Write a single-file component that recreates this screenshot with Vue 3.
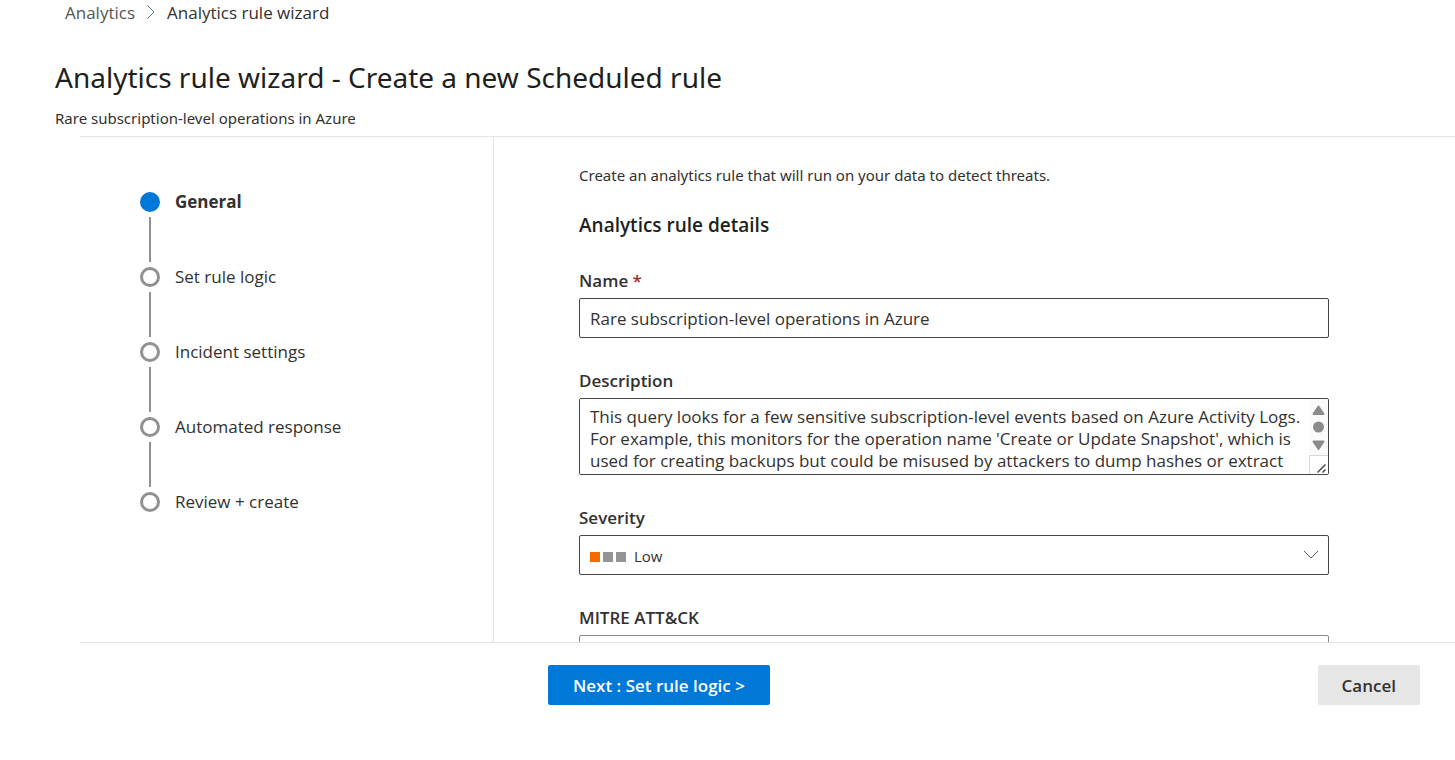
<script setup>
import { ref } from 'vue'

const steps = [
  'General',
  'Set rule logic',
  'Incident settings',
  'Automated response',
  'Review + create',
]
const current = ref(0)
const name = ref('Rare subscription-level operations in Azure')
const description = ref(
  "This query looks for a few sensitive subscription-level events based on Azure Activity Logs. For example, this monitors for the operation name 'Create or Update Snapshot', which is used for creating backups but could be misused by attackers to dump hashes or extract"
)
const severity = ref('Low')
const tactics = ref('')
</script>

<template>
  <div class="page">
    <header class="head">
      <nav class="crumbs" aria-label="Breadcrumb">
        <a href="#" class="crumb-link">Analytics</a>
        <svg class="crumb-sep" width="8" height="14" viewBox="0 0 8 14" aria-hidden="true">
          <path d="M0.500 0.500l6.500 6.500-6.500 6.500" fill="none" stroke="#5a6f9c" stroke-width="1" />
        </svg>
        <span>Analytics rule wizard</span>
      </nav>
      <h1>Analytics rule wizard - Create a new Scheduled rule</h1>
      <p class="subtitle">Rare subscription-level operations in Azure</p>
    </header>

    <div class="body">
      <nav class="side" aria-label="Wizard steps">
        <ol class="steps">
          <li v-for="(step, i) in steps" :key="step">
            <button
              type="button"
              class="step"
              :class="{ active: i === current }"
              @click="current = i"
            >
              <span class="dot"></span>
              <span class="step-text">{{ step }}</span>
            </button>
          </li>
        </ol>
      </nav>

      <main class="main">
        <form class="form" @submit.prevent>
          <p class="intro">Create an analytics rule that will run on your data to detect threats.</p>
          <h2>Analytics rule details</h2>

          <div class="field">
            <label for="name">Name <span class="req">*</span></label>
            <input id="name" v-model="name" class="control" type="text" required />
          </div>

          <div class="field">
            <label for="description">Description</label>
            <div class="area">
              <textarea id="description" v-model="description"></textarea>
              <div class="scroll" aria-hidden="true">
                <svg width="19" height="56" viewBox="0 0 19 56">
                  <path d="M9.500 7.500L14.500 15H4.500Z" fill="#8b8b8b" stroke="#8b8b8b" stroke-width="2" stroke-linejoin="round" />
                  <circle cx="9.500" cy="28" r="5.500" fill="#8b8b8b" />
                  <path d="M9.500 50L14.500 42.500H4.500Z" fill="#8b8b8b" stroke="#8b8b8b" stroke-width="2" stroke-linejoin="round" />
                </svg>
                <svg class="grip" width="19" height="19" viewBox="0 0 18 18">
                  <path d="M7.500 16.500L15.500 8.500M12.500 16.500L15.500 13.500" fill="none" stroke="#4a4a4a" stroke-width="1.500" />
                </svg>
              </div>
            </div>
          </div>

          <div class="field">
            <label for="severity">Severity</label>
            <div class="select">
              <select id="severity" v-model="severity" class="control">
                <option>High</option>
                <option>Medium</option>
                <option>Low</option>
                <option>Informational</option>
              </select>
              <span class="level" aria-hidden="true"><i class="on"></i><i></i><i></i></span>
              <svg class="chevron" width="16" height="9" viewBox="0 0 16 9" aria-hidden="true">
                <path d="M1 1l7 7 7-7" fill="none" stroke="#4f5f6f" stroke-width="1" />
              </svg>
            </div>
          </div>

          <div class="field">
            <label for="mitre">MITRE ATT&amp;CK</label>
            <select id="mitre" v-model="tactics" class="control light">
              <option value=""></option>
            </select>
          </div>
        </form>
      </main>
    </div>

    <footer class="foot">
      <button type="button" class="btn primary">Next : Set rule logic &gt;</button>
      <button type="button" class="btn">Cancel</button>
    </footer>
  </div>
</template>

<style>
body {
  margin: 0;
  background: #fff;
}
</style>

<style scoped>
.page {
  display: flex;
  flex-direction: column;
  height: 100vh;
  overflow: hidden;
  box-sizing: border-box;
  font-family: "Segoe UI", "Open Sans", "Noto Sans", sans-serif;
  font-size: 17px;
  color: #323130;
}
.page *,
.page *::before {
  box-sizing: border-box;
}
button,
input,
select,
textarea {
  font: inherit;
  color: inherit;
}
h1,
.subtitle,
.intro {
  font-family: "Segoe UI", "Noto Sans", "Open Sans", sans-serif;
}
.head {
  flex: none;
  padding-left: 55px;
}
.crumbs {
  display: flex;
  align-items: center;
  height: 24px;
  padding-left: 10px;
}
.crumb-link {
  color: #555;
  text-decoration: none;
}
.crumb-sep {
  margin: 0 12px;
}
h1 {
  margin: 31px 0 0;
  font-size: 28px;
  font-weight: 400;
  line-height: 44px;
  color: #201f1e;
}
.subtitle {
  margin: 9px 0 8px;
  font-size: 15px;
  line-height: 20px;
}
.body {
  flex: 1;
  min-height: 0;
  display: flex;
  margin-left: 80px;
  border-top: 1px solid #e5e5e5;
  border-bottom: 1px solid #e5e5e5;
}
.side {
  flex: none;
  width: 414px;
  padding: 50px 0 0 60px;
  border-right: 1px solid #e5e5e5;
}
.steps {
  display: flex;
  flex-direction: column;
  gap: 45px;
  margin: 0;
  padding: 0;
  list-style: none;
}
.steps li {
  position: relative;
  height: 30px;
}
.steps li + li::before {
  content: "";
  position: absolute;
  left: 9px;
  top: -45px;
  width: 2px;
  height: 45px;
  background: #919191;
}
.step {
  display: flex;
  align-items: center;
  gap: 15px;
  height: 30px;
  padding: 0;
  border: 0;
  background: none;
  white-space: nowrap;
}
.step-text {
  padding-bottom: 2px;
}
.step.active {
  font-weight: 700;
}
.dot {
  width: 20px;
  height: 20px;
  border: 3px solid #919191;
  border-radius: 50%;
}
.active .dot {
  border-color: #0078d7;
  background: #0078d7;
}
.main {
  flex: 1;
  min-width: 0;
  overflow: hidden;
  padding: 28px 85px 0;
}
.form {
  max-width: 750px;
}
.intro {
  margin: 0;
  font-size: 15px;
  line-height: 20px;
}
h2 {
  margin: 26px 0 0;
  font-size: 19px;
  font-weight: 600;
  line-height: 28px;
  color: #201f1e;
}
.field {
  margin-bottom: 32px;
}
h2 + .field {
  margin-top: 31px;
}
label {
  display: block;
  height: 28px;
  font-weight: 600;
  line-height: 22px;
}
.req {
  color: #a4262c;
}
.control {
  display: block;
  width: 100%;
  height: 40px;
  padding: 1px 10px;
  border: 1px solid #484644;
  border-radius: 2px;
  background: #fff;
  appearance: none;
}
.light {
  border-color: #8a8886;
}
.area {
  display: flex;
  height: 77px;
  border: 1px solid #484644;
  border-radius: 2px;
  overflow: hidden;
}
textarea {
  flex: 1;
  min-width: 0;
  padding: 7px 0 0 10px;
  border: 0;
  background: #fff;
  line-height: 22px;
  resize: none;
  overflow: hidden;
  outline: 0;
}
.scroll {
  display: flex;
  flex-direction: column;
  width: 19px;
  background: #fafafa;
}
.scroll svg {
  flex: none;
  display: block;
}
.scroll .grip {
  border: solid #d8d8d8;
  border-width: 1px 0 0 1px;
  background: #fff;
}
.select {
  position: relative;
}
.select .control {
  padding: 3px 10px 1px 54px;
  font-size: 15px;
}
.level {
  position: absolute;
  left: 11px;
  top: 17px;
  display: flex;
  gap: 3px;
  pointer-events: none;
}
.level i {
  width: 10px;
  height: 10px;
  background: #949494;
}
.level .on {
  background: #f56a00;
}
.chevron {
  position: absolute;
  right: 10px;
  top: 15px;
  pointer-events: none;
}
.foot {
  flex: none;
  display: flex;
  justify-content: space-between;
  align-items: flex-start;
  padding: 22px 35px 55px 548px;
}
.btn {
  height: 40px;
  padding: 0 24px;
  border: 0;
  border-radius: 2px;
  background: #e6e6e6;
  font-weight: 600;
  white-space: nowrap;
}
.primary {
  padding: 0 25px;
  background: #0078d7;
  color: #fff;
}
</style>
